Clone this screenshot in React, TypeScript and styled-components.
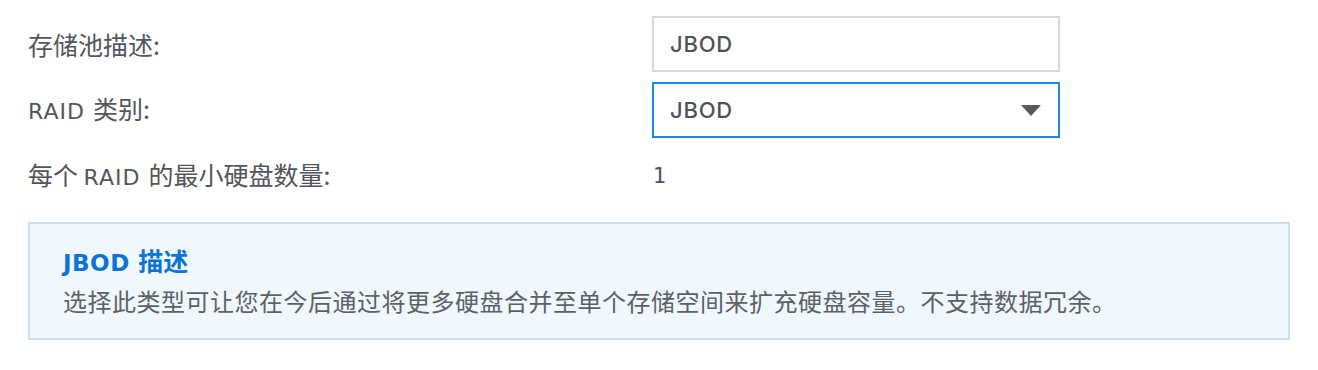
import React from "react";
import styled, { createGlobalStyle } from "styled-components";

const Global = createGlobalStyle`
  html, body { margin: 0; padding: 0; background: #ffffff; }
  body { font-family: "Noto Sans CJK SC", "DejaVu Sans", sans-serif; }
`;

const Page = styled.div`
  width: 1318px;
  box-sizing: border-box;
  padding: 16px 28px 0;
  display: flex;
  flex-direction: column;
`;

const Form = styled.div`
  display: grid;
  grid-template-columns: 624px 408px;
  grid-auto-rows: 56px;
  row-gap: 10px;
  align-items: center;
`;

const Label = styled.div`
  font-family: "Noto Sans CJK SC", sans-serif;
  font-size: 25px;
  line-height: 32px;
  color: #51575c;
  white-space: nowrap;
`;

const Lat = styled.span`
  font-family: "DejaVu Sans", "Noto Sans CJK SC", sans-serif;
  font-size: 22px;
  letter-spacing: 1px;
`;

const Field = styled.div<{ $focused?: boolean }>`
  height: 56px;
  box-sizing: border-box;
  border: 2px solid ${(p) => (p.$focused ? "#1a8ae5" : "#d5d8dc")};
  background: #ffffff;
  padding: 0 17px 0 16px;
  display: flex;
  align-items: center;
  justify-content: space-between;
  font-family: "Inter", "Lato", sans-serif;
  font-size: 22px;
  font-weight: 500;
  letter-spacing: 0.8px;
  color: #4f5357;
`;

const Arrow = styled.svg`
  width: 20px;
  height: 11px;
  display: block;
`;

const Value = styled.div`
  font-family: "DejaVu Sans", sans-serif;
  font-size: 21px;
  color: #4d5358;
  padding-left: 1px;
`;

const InfoBox = styled.div`
  margin-top: 18px;
  border: 2px solid #c6e0f4;
  background: #f0f8fe;
  padding: 20px 33px 21px;
  display: flex;
  flex-direction: column;
  gap: 6px;
`;

const InfoTitle = styled.div`
  font-family: "Noto Sans CJK SC", sans-serif;
  font-size: 25px;
  font-weight: 700;
  line-height: 32px;
  color: #0c74d1;
`;

const TitleLat = styled.span`
  font-family: "DejaVu Sans", "Noto Sans CJK SC", sans-serif;
  font-weight: 700;
  font-size: 23px;
  letter-spacing: 0.5px;
`;

const InfoText = styled.div`
  font-family: "Noto Sans CJK SC", sans-serif;
  font-size: 24px;
  line-height: 32px;
  letter-spacing: 0.5px;
  color: #5c6166;
  white-space: nowrap;
`;

export default function App() {
  return (
    <>
      <Global />
      <Page>
        <Form>
          <Label>存储池描述:</Label>
          <Field>JBOD</Field>

          <Label>
            <Lat>RAID </Lat>类别:
          </Label>
          <Field $focused>
            JBOD
            <Arrow viewBox="0 0 20 11">
              <path d="M0 0 H20 L10 11 Z" fill="#555a5e" />
            </Arrow>
          </Field>

          <Label>
            每个 <Lat>RAID </Lat>的最小硬盘数量:
          </Label>
          <Value>1</Value>
        </Form>

        <InfoBox>
          <InfoTitle>
            <TitleLat>JBOD </TitleLat>描述
          </InfoTitle>
          <InfoText>
            选择此类型可让您在今后通过将更多硬盘合并至单个存储空间来扩充硬盘容量。不支持数据冗余。
          </InfoText>
        </InfoBox>
      </Page>
    </>
  );
}
